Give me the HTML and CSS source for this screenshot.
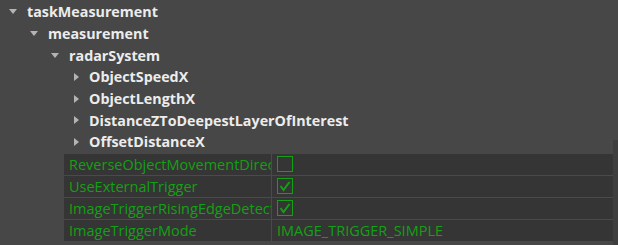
FILE: index.html
```html
<!DOCTYPE html>
<html>
<head>
<meta charset="utf-8">
<link rel="stylesheet" href="styles.css">
</head>
<body>
<div class="panel">
  <div class="tree">
    <div class="node l0"><span class="arrow down"></span><span class="name">taskMeasurement</span></div>
    <div class="node l1"><span class="arrow down"></span><span class="name">measurement</span></div>
    <div class="node l2"><span class="arrow down"></span><span class="name">radarSystem</span></div>
    <div class="node l3"><span class="arrow right"></span><span class="name">ObjectSpeedX</span></div>
    <div class="node l3"><span class="arrow right"></span><span class="name">ObjectLengthX</span></div>
    <div class="node l3"><span class="arrow right"></span><span class="name">DistanceZToDeepestLayerOfInterest</span></div>
    <div class="node l3"><span class="arrow right"></span><span class="name">OffsetDistanceX</span></div>
  </div>
  <div class="props">
    <div class="prop">
      <div class="key">ReverseObjectMovementDirection</div>
      <div class="val"><span class="check"></span></div>
    </div>
    <div class="prop">
      <div class="key">UseExternalTrigger</div>
      <div class="val"><span class="check"><svg viewBox="0 0 16 16" width="16" height="16"><path d="M3.5 8 L6.5 12 L12.5 4" fill="none" stroke="#14a014" stroke-width="2"/></svg></span></div>
    </div>
    <div class="prop">
      <div class="key">ImageTriggerRisingEdgeDetection</div>
      <div class="val"><span class="check"><svg viewBox="0 0 16 16" width="16" height="16"><path d="M3.5 8 L6.5 12 L12.5 4" fill="none" stroke="#14a014" stroke-width="2"/></svg></span></div>
    </div>
    <div class="prop">
      <div class="key">ImageTriggerMode</div>
      <div class="val text">IMAGE_TRIGGER_SIMPLE</div>
    </div>
  </div>
  <div class="scroll"></div>
</div>
</body>
</html>
```
FILE: styles.css
```css
html, body {
  margin: 0;
  padding: 0;
  background: #474747;
}
.panel {
  width: 618px;
  height: 245px;
  position: relative;
  overflow: hidden;
  font-family: "Open Sans", sans-serif;
}
.tree {
  padding-top: 1px;
}
.node {
  height: 21.7px;
  display: flex;
  align-items: center;
  color: #ececec;
  font-weight: 700;
  font-size: 14.3px;
}
.l0 { padding-left: 9px; }
.l1 { padding-left: 30px; }
.l2 { padding-left: 51px; }
.l3 { padding-left: 74px; }
.arrow {
  width: 0;
  height: 0;
  display: inline-block;
}
.arrow.down {
  border-left: 4px solid transparent;
  border-right: 4px solid transparent;
  border-top: 5px solid #b4b4b4;
  margin-right: 10px;
}
.arrow.right {
  border-top: 4px solid transparent;
  border-bottom: 4px solid transparent;
  border-left: 5px solid #b4b4b4;
  margin-right: 10px;
}
.props {
  margin-left: 64px;
  margin-top: 1px;
  width: 549px;
  background: #4a4a4a;
  display: flex;
  flex-direction: column;
  gap: 1px;
}
.prop {
  height: 21px;
  display: flex;
  background: #353535;
  color: #14a014;
  font-size: 14.5px;
}
.key {
  width: 208px;
  padding-left: 5px;
  box-sizing: border-box;
  border-right: 1px solid #4a4a4a;
  white-space: nowrap;
  overflow: hidden;
  display: flex;
  align-items: center;
}
.val {
  flex: 1;
  padding-left: 5px;
  display: flex;
  align-items: center;
}
.check {
  width: 16px;
  height: 16px;
  box-sizing: border-box;
  border: 1px solid #14a014;
  display: flex;
}
.check svg {
  margin: -1px;
}
.scroll {
  position: absolute;
  right: 0;
  top: 140px;
  width: 5px;
  height: 105px;
  background: #3e3e3e;
}
```
